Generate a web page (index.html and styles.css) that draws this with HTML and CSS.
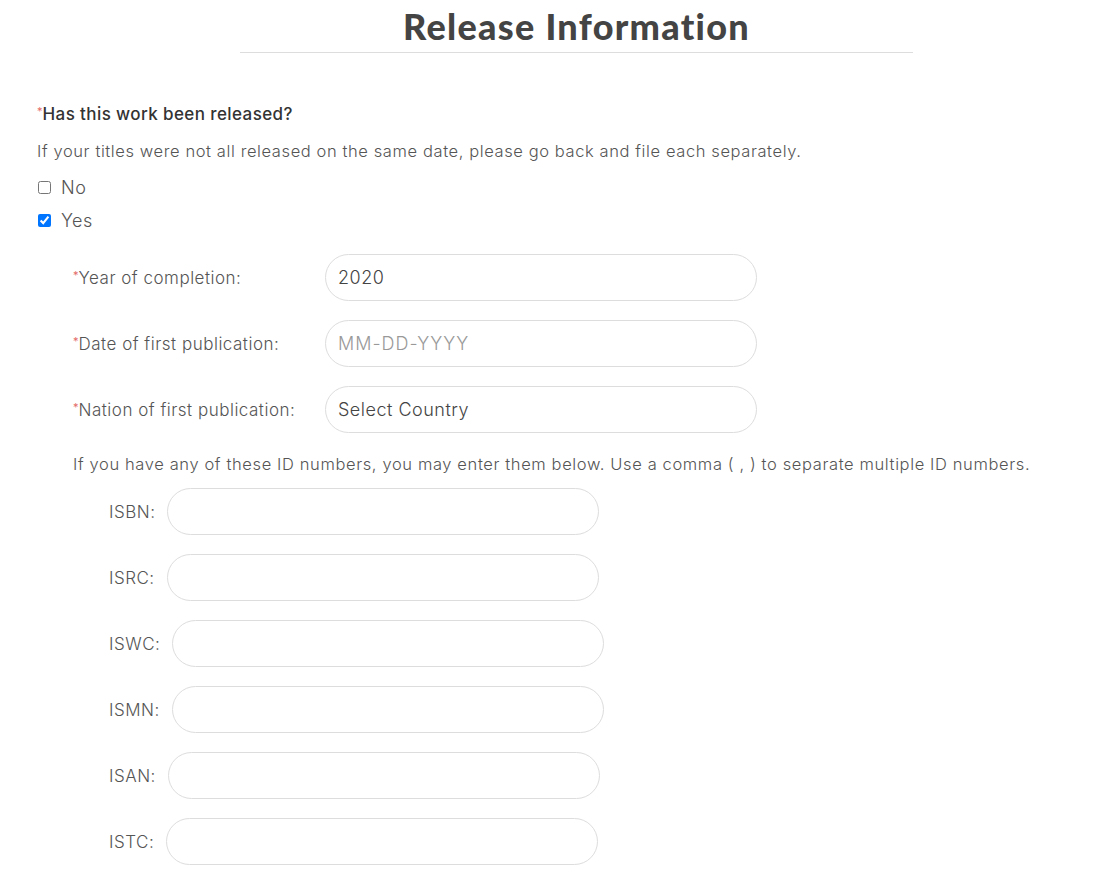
FILE: index.html
```html
<!DOCTYPE html>
<html lang="en">
<head>
<meta charset="utf-8">
<title>Release Information</title>
<link rel="stylesheet" href="styles.css">
</head>
<body>
<div class="page">
  <header class="header">
    <h1 class="title">Release Information</h1>
  </header>

  <section class="question">
    <div class="q-label"><span class="req">*</span>Has this work been released?</div>
    <p class="q-help">If your titles were not all released on the same date, please go back and file each separately.</p>
    <label class="check"><input type="checkbox"> <span>No</span></label>
    <label class="check"><input type="checkbox" checked> <span>Yes</span></label>
  </section>

  <section class="details">
    <div class="field-row">
      <div class="field-label"><span class="req">*</span>Year of completion:</div>
      <input class="pill" type="text" value="2020">
    </div>
    <div class="field-row">
      <div class="field-label"><span class="req">*</span>Date of first publication:</div>
      <input class="pill" type="text" placeholder="MM-DD-YYYY">
    </div>
    <div class="field-row">
      <div class="field-label"><span class="req">*</span>Nation of first publication:</div>
      <div class="pill select">Select Country</div>
    </div>

    <p class="id-help">If you have any of these ID numbers, you may enter them below. Use a comma ( , ) to separate multiple ID numbers.</p>

    <div class="ids">
      <div class="id-row"><span class="id-label">ISBN:</span><input class="pill" type="text"></div>
      <div class="id-row"><span class="id-label">ISRC:</span><input class="pill" type="text"></div>
      <div class="id-row"><span class="id-label">ISWC:</span><input class="pill" type="text"></div>
      <div class="id-row"><span class="id-label">ISMN:</span><input class="pill" type="text"></div>
      <div class="id-row"><span class="id-label">ISAN:</span><input class="pill" type="text"></div>
      <div class="id-row"><span class="id-label">ISTC:</span><input class="pill" type="text"></div>
    </div>
  </section>
</div>
</body>
</html>
```
FILE: styles.css
```css
* { box-sizing: border-box; }
html, body { margin: 0; padding: 0; background: #fff; }
body {
  font-family: Inter, Lato, sans-serif;
  color: #555;
}
.page { padding: 0 0 0 37px; }

.header {
  width: 673px;
  margin-left: 203px;
  border-bottom: 1px solid #ddd;
  text-align: center;
  height: 53px;
}
.title {
  margin: 0;
  padding-top: 5px;
  font-family: Lato, sans-serif;
  font-size: 36px;
  line-height: 42px;
  font-weight: 900;
  letter-spacing: 1.3px;
  color: #444;
}

.question { padding-top: 46px; }
.q-label {
  font-size: 17px;
  line-height: 24px;
  font-weight: 500;
  letter-spacing: 0.4px;
  color: #333;
}
.req {
  color: #e46a6a;
  font-size: 11px;
  vertical-align: 5px;
  font-weight: 400;
  letter-spacing: 0;
}
.q-help {
  margin: 13px 0 0;
  font-size: 16.5px;
  line-height: 24px;
  font-weight: 300;
  letter-spacing: 0.6px;
  color: #555;
}
.check {
  display: flex;
  align-items: center;
  gap: 10px;
  height: 33px;
  font-size: 18px;
  font-weight: 300;
  letter-spacing: 0.5px;
  color: #555;
}
.check input {
  margin: 0 0 0 1px;
  width: 13px;
  height: 13px;
}
.check:first-of-type { margin-top: 8px; }

.details { padding: 17px 0 0 36px; }
.field-row {
  display: flex;
  align-items: center;
  margin-bottom: 19px;
}
.field-label {
  width: 252px;
  font-size: 17px;
  font-weight: 300;
  letter-spacing: 0.5px;
  color: #555;
}
.pill {
  width: 432px;
  height: 47px;
  border: 1px solid #ddd;
  border-radius: 24px;
  padding: 0 12px;
  font-family: Inter, Lato, sans-serif;
  font-size: 18px;
  font-weight: 300;
  letter-spacing: 0.5px;
  color: #444;
  background: #fff;
  outline: none;
}
.pill::placeholder { color: #999; letter-spacing: 1px; }
.select {
  display: flex;
  align-items: center;
}
.id-help {
  margin: 12px 0 12px;
  font-size: 16.5px;
  line-height: 24px;
  font-weight: 300;
  letter-spacing: 0.62px;
}
.ids { padding-left: 36px; }
.id-row {
  display: flex;
  align-items: center;
  gap: 12px;
  margin-bottom: 19px;
}
.id-label { font-size: 17px; font-weight: 300; letter-spacing: 0.5px; color: #555; }
```
